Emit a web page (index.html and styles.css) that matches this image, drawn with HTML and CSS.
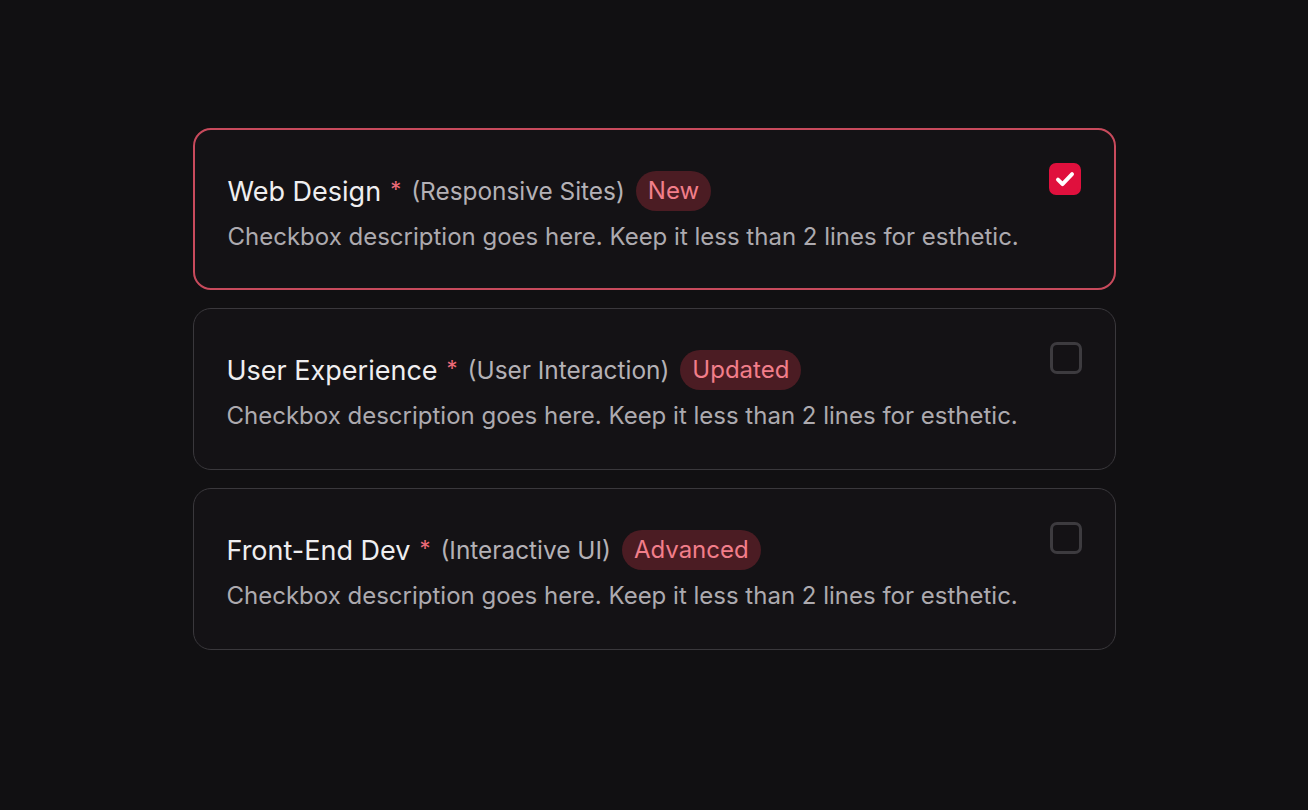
FILE: index.html
```html
<!DOCTYPE html>
<html lang="en">

<head>
    <meta charset="UTF-8">
    <meta name="viewport" content="width=device-width, initial-scale=1.0">
    <title>Checkbox Cards</title>
    <link rel="stylesheet" href="styles.css">
</head>

<body>
    <div class="container">
        <label class="card checked">
            <div class="text">
                <div class="title">
                    <span class="name">Web Design</span>
                    <span class="req">*</span>
                    <span class="sub">(Responsive Sites)</span>
                    <span class="badge">New</span>
                </div>
                <p class="desc">Checkbox description goes here. Keep it less than 2 lines for esthetic.</p>
            </div>
            <span class="box">
                <svg viewBox="0 0 24 24" width="26" height="26"><path d="M5.5 12.5l4.2 4.2L18.5 7.5" fill="none" stroke="#fff" stroke-width="3.6" stroke-linecap="round" stroke-linejoin="round"/></svg>
            </span>
        </label>

        <label class="card">
            <div class="text">
                <div class="title">
                    <span class="name">User Experience</span>
                    <span class="req">*</span>
                    <span class="sub">(User Interaction)</span>
                    <span class="badge">Updated</span>
                </div>
                <p class="desc">Checkbox description goes here. Keep it less than 2 lines for esthetic.</p>
            </div>
            <span class="box"></span>
        </label>

        <label class="card">
            <div class="text">
                <div class="title">
                    <span class="name">Front-End Dev</span>
                    <span class="req">*</span>
                    <span class="sub">(Interactive UI)</span>
                    <span class="badge">Advanced</span>
                </div>
                <p class="desc">Checkbox description goes here. Keep it less than 2 lines for esthetic.</p>
            </div>
            <span class="box"></span>
        </label>
    </div>
</body>

</html>
```

FILE: styles.css
```css
/* Basic Style */
body {
    margin: 0;
    background: #111012;
    color: #eeeeef;
    font-family: Inter, sans-serif;
}

.container {
    width: 923px;
    margin: 128px auto 0;
    display: flex;
    flex-direction: column;
    gap: 18px;
}

/* Card */
.card {
    display: flex;
    justify-content: space-between;
    align-items: flex-start;
    height: 162px;
    box-sizing: border-box;
    padding: 0 33px;
    background: #141215;
    border: 1.5px solid #3a383c;
    border-radius: 18px;
    cursor: pointer;
}

.card.checked {
    border: 2px solid #c84a5c;
}

.text {
    padding-top: 40px;
}

.title {
    display: flex;
    align-items: center;
    height: 42px;
}

.name {
    font-size: 27px;
    color: #efeef0;
}

.req {
    font-size: 22px;
    color: #ec6a78;
    margin: 0 10px 0 9px;
    position: relative;
    top: -2px;
}

.sub {
    font-size: 24.4px;
    color: #b4b1b6;
    margin-right: 11px;
}

.badge {
    font-size: 24px;
    color: #f27e8a;
    background: #4b1c23;
    border-radius: 20px;
    padding: 0 12px;
    line-height: 40px;
}

.desc {
    margin: 10px 0 0;
    font-size: 24px;
    color: #adaaaf;
}

/* Checkbox */
.box {
    margin-top: 33px;
    width: 32px;
    height: 32px;
    box-sizing: border-box;
    border: 3px solid #3d3b3f;
    border-radius: 7px;
    display: flex;
    align-items: center;
    justify-content: center;
    flex-shrink: 0;
}

.checked .box {
    margin-top: 32.5px;
    background: #e0103d;
    border-color: #e0103d;
}
```
